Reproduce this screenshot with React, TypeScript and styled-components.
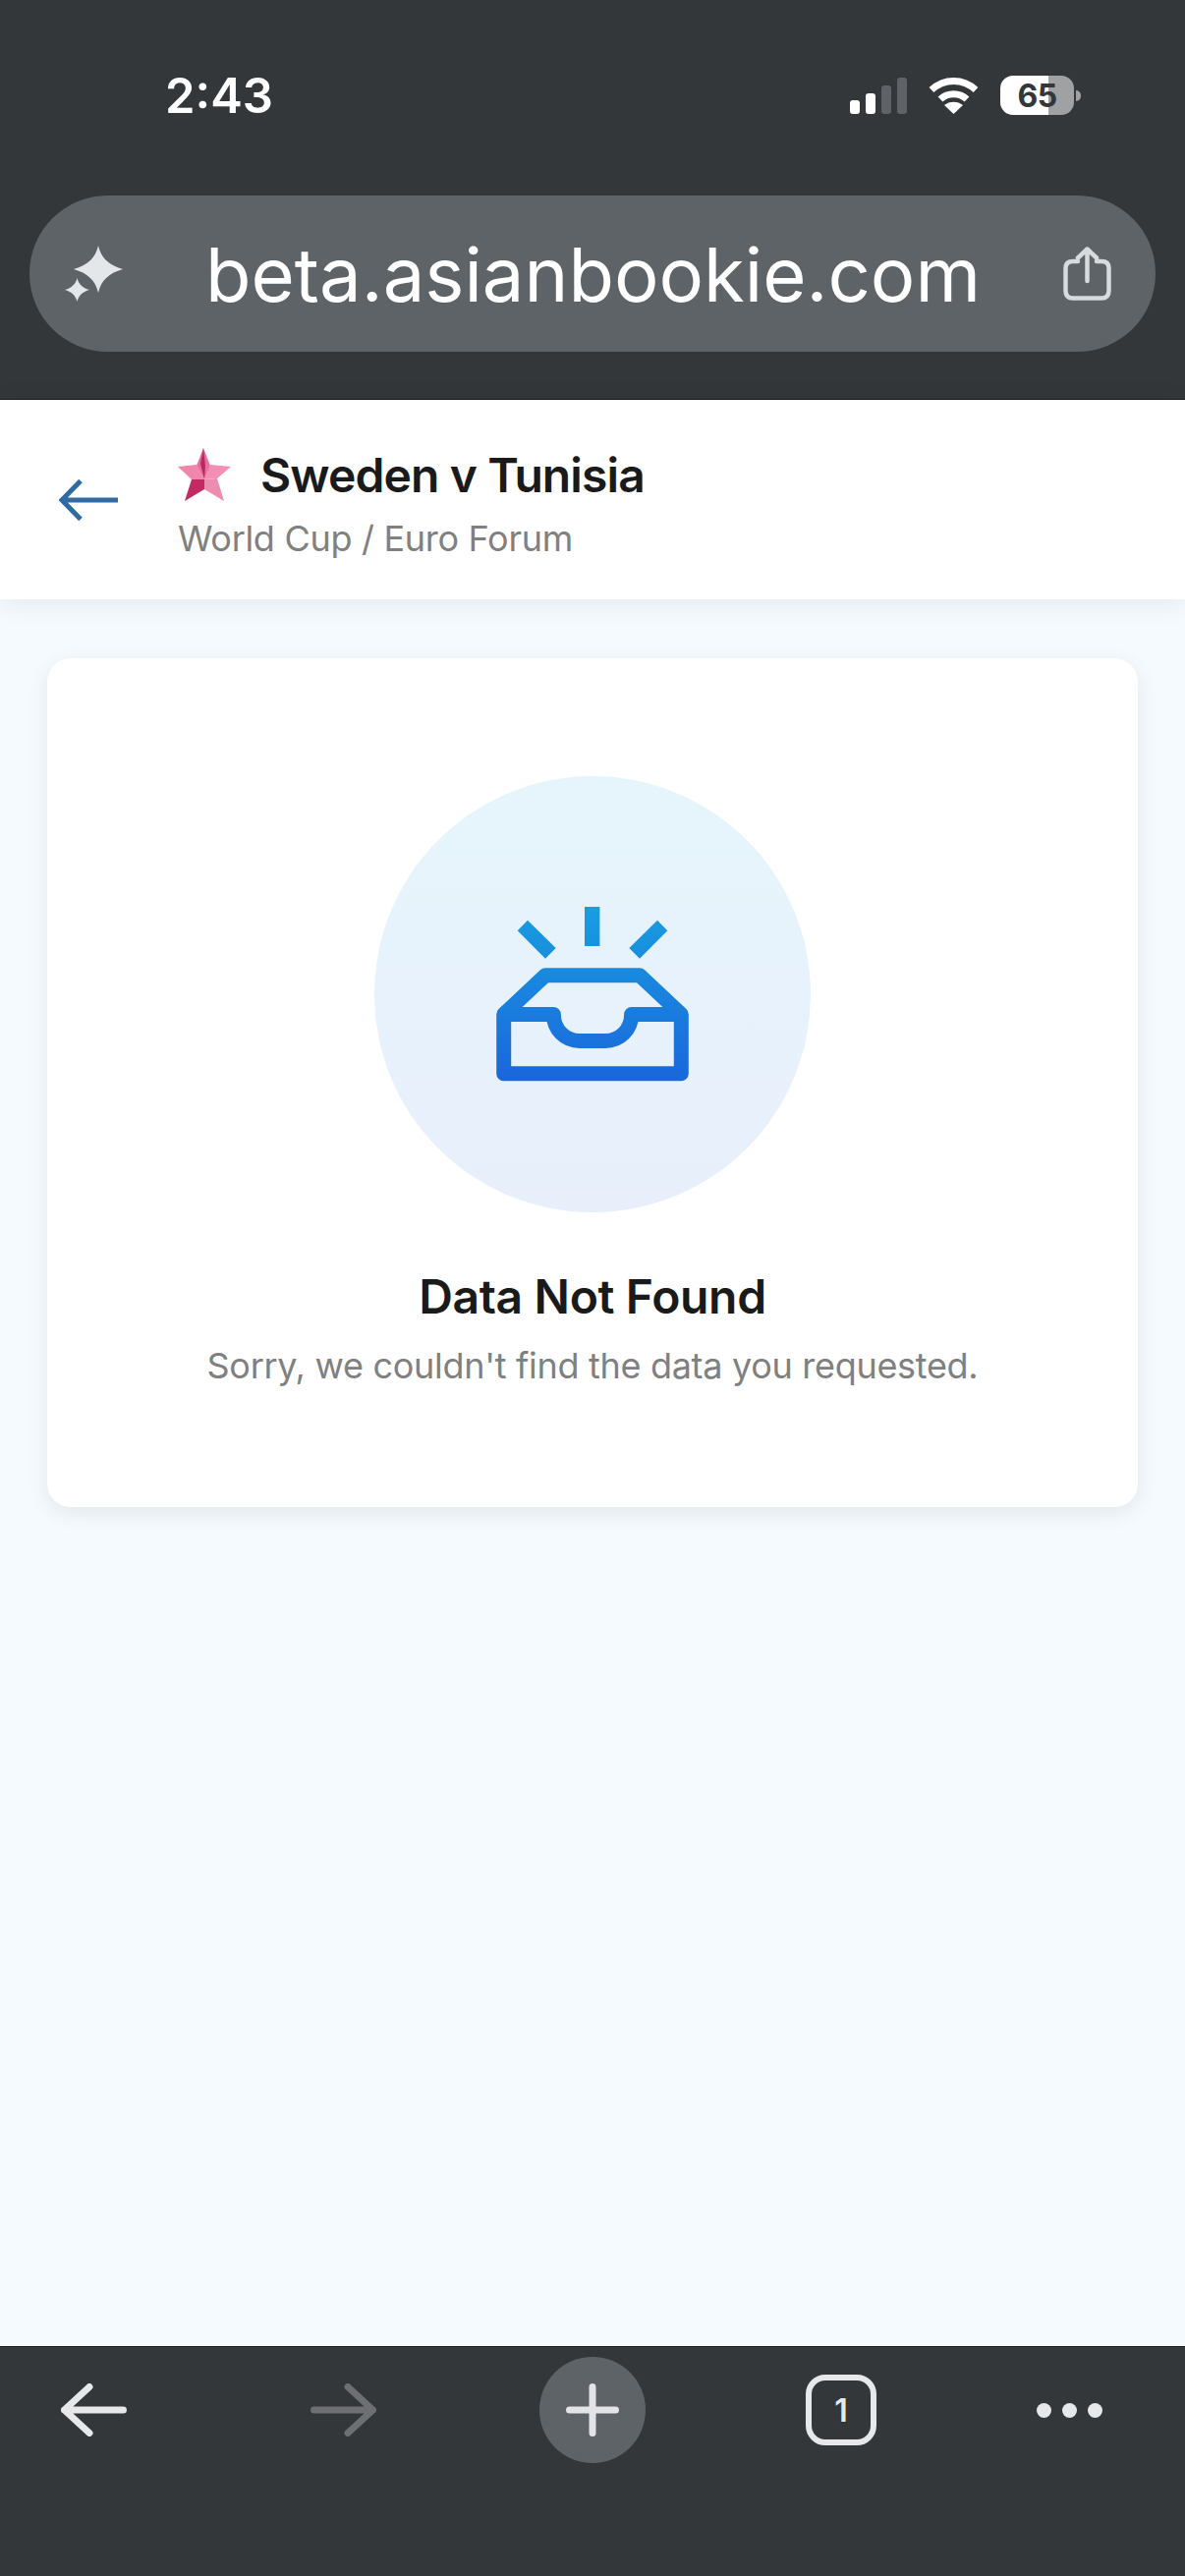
import React from 'react'
import styled, { createGlobalStyle } from 'styled-components'

const GlobalStyle = createGlobalStyle`
  html, body {
    margin: 0;
    padding: 0;
    background: #f5faff;
    font-family: Inter, "Noto Sans", sans-serif;
  }
  * { box-sizing: border-box; }
`

const Page = styled.div`
  width: 1206px;
  height: 2622px;
  display: flex;
  flex-direction: column;
  overflow: hidden;
`

const TopChrome = styled.div`
  height: 407px;
  flex: none;
  padding: 0 30px;
  background: #33373a;
  border-bottom: 1px solid #16181a;
`

const StatusBar = styled.div`
  height: 199px;
  padding: 0 76px 5px 138px;
  display: flex;
  align-items: center;
  justify-content: space-between;
`

const Clock = styled.span`
  font-size: 49px;
  font-weight: 600;
  color: #fff;
`

const StatusIcons = styled.div`
  display: flex;
  align-items: center;
  gap: 22px;
`

const SignalBars = styled.div`
  display: flex;
  align-items: flex-end;
  gap: 6px;
  height: 37px;
`

const SignalBar = styled.span<{ $height: number; $on: boolean }>`
  width: 10px;
  height: ${({ $height }) => $height}px;
  border-radius: 3px;
  background: ${({ $on }) => ($on ? '#fff' : '#5f6266')};
`

const Battery = styled.div<{ $level: number }>`
  width: 75px;
  height: 40px;
  border-radius: 13px;
  display: flex;
  align-items: center;
  justify-content: center;
  font-size: 32px;
  font-weight: 700;
  letter-spacing: -0.5px;
  color: #33373a;
  background: linear-gradient(
    90deg,
    #fff ${({ $level }) => $level}%,
    #a0a1a3 ${({ $level }) => $level}%
  );
`

const BatteryWrap = styled.div`
  display: flex;
  align-items: center;
  gap: 2px;
`

const BatteryNub = styled.span`
  width: 5px;
  height: 11px;
  border-radius: 0 5px 5px 0;
  background: #a0a1a3;
`

const UrlPill = styled.div`
  height: 159px;
  padding: 0 45px 0 36px;
  display: grid;
  grid-template-columns: 59px 1fr 49px;
  align-items: center;
  border-radius: 80px;
  background: #5e6367;
`

const UrlText = styled.span`
  text-align: center;
  font-size: 76px;
  font-weight: 400;
  color: #fff;
  white-space: nowrap;
`

const ForumHeader = styled.header`
  height: 203px;
  flex: none;
  position: relative;
  padding-left: 60px;
  display: flex;
  align-items: center;
  gap: 61px;
  background: #fff;
  box-shadow: 0 4px 28px rgba(0, 0, 0, 0.07);
`

const HeaderText = styled.div`
  display: flex;
  flex-direction: column;
  gap: 14px;
  padding-top: 8px;
`

const TitleRow = styled.div`
  display: flex;
  align-items: center;
  gap: 30px;
  height: 56px;
`

const ThreadTitle = styled.h1`
  margin: 0;
  font-size: 48px;
  font-weight: 600;
  letter-spacing: -0.9px;
  color: #1a1a1a;
  white-space: nowrap;
`

const ForumName = styled.div`
  font-size: 36px;
  font-weight: 400;
  letter-spacing: -0.3px;
  color: #808080;
`

const Content = styled.main`
  flex: 1;
  padding: 60px 48px 0;
  background: #f5faff;
`

const EmptyCard = styled.section`
  height: 864px;
  padding-top: 120px;
  display: flex;
  flex-direction: column;
  align-items: center;
  border-radius: 24px;
  background: #fff;
  box-shadow: 0 6px 22px rgba(0, 0, 0, 0.08);
`

const IconCircle = styled.div`
  width: 444px;
  height: 444px;
  border-radius: 50%;
  display: flex;
  align-items: center;
  justify-content: center;
  background: linear-gradient(180deg, #e6f5fc 0%, #e8effb 100%);
`

const EmptyTitle = styled.h2`
  margin: 56px 0 0;
  font-size: 48px;
  font-weight: 600;
  letter-spacing: -0.35px;
  color: #1a1a1a;
`

const EmptyText = styled.p`
  margin: 19px 0 0;
  font-size: 36px;
  font-weight: 400;
  letter-spacing: -0.3px;
  color: #808080;
`

const BottomBar = styled.nav`
  height: 234px;
  flex: none;
  padding: 10px 0 0 62px;
  display: grid;
  grid-template-columns: 254px 233px 271px 235px auto;
  grid-auto-rows: 108px;
  align-items: center;
  background: #33373a;
  border-top: 1px solid #16181a;
`

const NewTabButton = styled.div`
  width: 108px;
  height: 108px;
  border-radius: 50%;
  display: flex;
  align-items: center;
  justify-content: center;
  background: #5e6367;
`

const TabCount = styled.div`
  width: 72px;
  height: 72px;
  border: 6px solid #e6e8ea;
  border-radius: 20px;
  display: flex;
  align-items: center;
  justify-content: center;
  font-size: 32px;
  font-weight: 600;
  color: #e6e8ea;
`

const MoreDots = styled.div`
  display: flex;
  gap: 11px;
`

const Dot = styled.span`
  width: 15px;
  height: 15px;
  border-radius: 50%;
  background: #e6e8ea;
`

const WifiIcon = () => (
  <svg width="51" height="37" viewBox="0 0 51 37" fill="none" stroke="#fff" strokeWidth="7">
    <path d="M3 12.5C16 0.5 35 0.5 48 12.5" />
    <path d="M12 22C19.5 15 31.5 15 39 22" />
    <path d="M25.5 37L16 28C21.5 23.5 29.5 23.5 35 28Z" fill="#fff" stroke="none" />
  </svg>
)

const SparkleIcon = () => (
  <svg width="59" height="57" viewBox="0 0 59 57" fill="#e4e7ea">
    <path d="M34 0C37 13 45 20 59 24C45 28 37 35 34 48C31 35 23 28 9 24C23 20 31 13 34 0Z" />
    <path d="M12.5 33C14 39 18 43 25 45C18 47 14 51 12.5 57C11 51 7 47 0 45C7 43 11 39 12.5 33Z" />
  </svg>
)

const ShareIcon = () => (
  <svg width="49" height="55" viewBox="0 0 49 55" fill="none" stroke="#d8dbde" strokeWidth="4.5" strokeLinecap="round" strokeLinejoin="round">
    <path d="M15 15H10C5 15 2.5 17.5 2.5 22V45C2.5 50 5 52.5 10 52.5H39C44 52.5 46.5 50 46.5 45V22C46.5 17.5 44 15 39 15H34" />
    <path d="M24.5 35V2.5M15 11.5L24.5 2.5L34 11.5" />
  </svg>
)

// five-point star split into facets, lit from the right
const StarBadge = () => (
  <svg width="54" height="55" viewBox="0 0 54 55">
    <polygon points="26,0 33,18 27,32 19,18" fill="#e8709c" />
    <polygon points="26,0 28,18 27,32 23,16" fill="#b92a64" />
    <polygon points="0,19 19,17 27,32 14,32" fill="#f086ac" />
    <polygon points="54,19 33,17 27,32 40,31" fill="#f28fb3" />
    <polygon points="14,32 27,32 27,42 7,54" fill="#c22a62" />
    <polygon points="27,32 40,31 47,54 27,42" fill="#ec8db0" />
  </svg>
)

const InboxIcon = () => (
  <svg width="196" height="178" viewBox="0 0 196 178" fill="none">
    <defs>
      <linearGradient id="inboxBlue" gradientUnits="userSpaceOnUse" x1="0" y1="0" x2="0" y2="178">
        <stop offset="0" stopColor="#189ee0" />
        <stop offset="1" stopColor="#1a66dc" />
      </linearGradient>
    </defs>
    <rect x="90" y="0" width="15.4" height="40" fill="url(#inboxBlue)" />
    <polygon points="32,13.7 60.7,42 50,52.7 21.7,24.3" fill="url(#inboxBlue)" />
    <polygon points="164,13.7 135.3,42 146,52.7 174.3,24.3" fill="url(#inboxBlue)" />
    <path
      d="M7.7 169.8V109.5L50 69.7H146L188.3 109.5V169.8ZM7.7 109.5H58.4C58.4 125 70 136.5 85 136.5H111C126 136.5 137.6 125 137.6 109.5H188.3"
      stroke="url(#inboxBlue)"
      strokeWidth="15"
      strokeLinejoin="round"
    />
  </svg>
)

const HeaderBackArrow = () => (
  <svg width="60" height="42" viewBox="0 0 60 42" fill="none" stroke="#2f6aa3" strokeWidth="5">
    <path d="M60 21H3M22 1.5L3 21L22 40.5" />
  </svg>
)

const NavArrow = ({ color, flip }: { color: string; flip?: boolean }) => (
  <svg width="67" height="54" viewBox="0 0 67 54" fill="none" stroke={color} strokeWidth="7" strokeLinecap="round" strokeLinejoin="round">
    <path d={flip ? 'M3.5 27H63.5M38 3.5L63.5 27L38 50.5' : 'M63.5 27H3.5M29 3.5L3.5 27L29 50.5'} />
  </svg>
)

const PlusIcon = () => (
  <svg width="54" height="54" viewBox="0 0 54 54" fill="none" stroke="#e2e4e7" strokeWidth="7" strokeLinecap="round">
    <path d="M27 3.5V50.5M3.5 27H50.5" />
  </svg>
)

export default function App() {
  const signal = [
    { height: 14, on: true },
    { height: 21, on: true },
    { height: 29, on: false },
    { height: 37, on: false },
  ]

  return (
    <Page>
      <GlobalStyle />
      <TopChrome>
        <StatusBar>
          <Clock>2:43</Clock>
          <StatusIcons>
            <SignalBars>
              {signal.map(({ height, on }) => (
                <SignalBar key={height} $height={height} $on={on} />
              ))}
            </SignalBars>
            <WifiIcon />
            <BatteryWrap>
              <Battery $level={65}>65</Battery>
              <BatteryNub />
            </BatteryWrap>
          </StatusIcons>
        </StatusBar>
        <UrlPill>
          <SparkleIcon />
          <UrlText>beta.asianbookie.com</UrlText>
          <ShareIcon />
        </UrlPill>
      </TopChrome>

      <ForumHeader>
        <HeaderBackArrow />
        <HeaderText>
          <TitleRow>
            <StarBadge />
            <ThreadTitle>Sweden v Tunisia</ThreadTitle>
          </TitleRow>
          <ForumName>World Cup / Euro Forum</ForumName>
        </HeaderText>
      </ForumHeader>

      <Content>
        <EmptyCard>
          <IconCircle>
            <InboxIcon />
          </IconCircle>
          <EmptyTitle>Data Not Found</EmptyTitle>
          <EmptyText>Sorry, we couldn't find the data you requested.</EmptyText>
        </EmptyCard>
      </Content>

      <BottomBar>
        <NavArrow color="#e6e8ea" />
        <NavArrow color="#6d6f72" flip />
        <NewTabButton>
          <PlusIcon />
        </NewTabButton>
        <TabCount>1</TabCount>
        <MoreDots>
          <Dot />
          <Dot />
          <Dot />
        </MoreDots>
      </BottomBar>
    </Page>
  )
}
